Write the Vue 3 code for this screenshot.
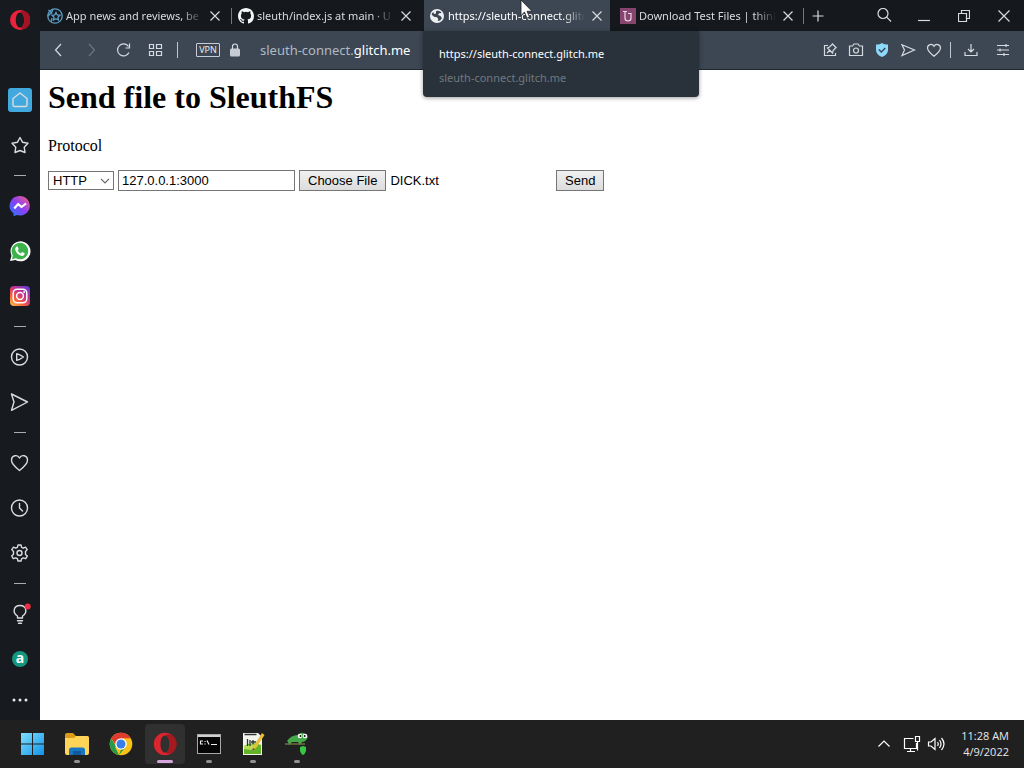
<script setup>
import { onMounted, ref } from 'vue'

const protocol = ref('HTTP')
const host = ref('127.0.0.1:3000')
const fileInput = ref(null)

onMounted(() => {
  const transfer = new DataTransfer()
  transfer.items.add(new File([''], 'DICK.txt', { type: 'text/plain' }))
  fileInput.value.files = transfer.files
})
</script>

<template>
  <div class="desktop">
    <div class="browser">
      <nav class="sidebar" aria-label="Sidebar">
        <button class="brand" aria-label="Opera menu">
          <svg width="20" height="20" viewBox="0 0 20 20"><path fill="#e8233b" fill-rule="evenodd" d="M10 0a10 10 0 1 0 0 20a10 10 0 0 0 0-20zM10 2.4c2.6 0 4.2 3.5 4.2 7.6s-1.6 7.6-4.2 7.6S5.8 14.1 5.8 10 7.400 2.400 10 2.400z"/><path fill="#a51224" d="M10 2.400c2-2 5-1.500 7-.1a10 10 0 0 1 0 15.400c-2 1.400-5 1.900-7-.1 2.600 0 4.200-3.500 4.200-7.600S12.600 2.400 10 2.400z"/></svg>
        </button>
        <button class="side" aria-label="Home">
          <svg width="24" height="24" viewBox="0 0 24 24"><rect width="24" height="24" rx="3" fill="#41a9de"/><path class="line" d="M5 10.500L12 5l7 5.500V17q0 1.500-1.500 1.500h-11Q5 18.500 5 17z"/></svg>
        </button>
        <button class="side" aria-label="Bookmarks">
          <svg class="line" width="20" height="20" viewBox="0 0 20 20"><path d="M10 2.500l2.500 4.700 5.500 1-3.800 4 .8 5.300-5-2-5 2 .8-5.300-3.800-4 5.500-1z"/></svg>
        </button>
        <hr />
        <button class="side" aria-label="Messenger">
          <svg width="22" height="22" viewBox="0 0 22 22"><defs><linearGradient id="msg" x1="0" y1="1" x2="1" y2="0"><stop stop-color="#1d7cff"/><stop offset=".5" stop-color="#8b3ff5"/><stop offset="1" stop-color="#ff6178"/></linearGradient></defs><path fill="url(#msg)" d="M11 1a10 9.700 0 1 1-3 19l-3.500 1.300v-3A10 9.700 0 0 1 11 1z"/><path fill="none" stroke="#fff" stroke-width="2.200" stroke-linejoin="round" d="M5.200 13.500l4-4.500 3.300 3L17 8.500"/></svg>
        </button>
        <button class="side" aria-label="WhatsApp">
          <svg width="22" height="22" viewBox="0 0 22 22"><path fill="#fff" d="M1 21l1.500-5.300A10 10 0 1 1 6.500 20z"/><path fill="#3bb34a" d="M2.900 19.200l1-3.700a8.300 8.300 0 1 1 3 2.800z"/><path fill="#fff" d="M7.500 6.500h1l1.200 2.600-1 1.300c.8 1.500 1.800 2.400 3.200 3l1.200-1.300 2.600 1.200c0 1.500-1 2.600-2.500 2.600-3.400 0-7-3.800-7-6.800q0-1.600 1.300-2.600z"/></svg>
        </button>
        <button class="side" aria-label="Instagram">
          <svg width="20" height="20" viewBox="0 0 20 20"><defs><linearGradient id="ig" x1="0" y1="1" x2=".8" y2="0"><stop stop-color="#ffc64d"/><stop offset=".35" stop-color="#f5603b"/><stop offset=".65" stop-color="#c9308c"/><stop offset="1" stop-color="#6b3bd1"/></linearGradient></defs><rect width="20" height="20" rx="4" fill="url(#ig)"/><g fill="none" stroke="#fff" stroke-width="1.500"><rect x="3.200" y="3.200" width="13.600" height="13.600" rx="4"/><circle cx="10" cy="10" r="3.400"/></g><circle cx="14.100" cy="5.900" r="1" fill="#fff"/></svg>
        </button>
        <hr />
        <button class="side" aria-label="Player">
          <svg class="line" width="20" height="20" viewBox="0 0 20 20"><circle cx="9.500" cy="10" r="8"/><path d="M6.700 6.700q3 .6 6.800 3.300-3.800 2.700-6.800 3.300z"/></svg>
        </button>
        <button class="side" aria-label="My Flow">
          <svg class="line" width="20" height="20" viewBox="0 0 20 20"><path d="M1.500 2l16 8-16 8.300 2.500-8.300z"/></svg>
        </button>
        <hr />
        <button class="side" aria-label="Pinboards">
          <svg class="line" width="20" height="20" viewBox="0 0 20 20"><path d="M9.500 17.500C5 14 1.500 11 1.500 7.300c0-5 6-6.300 8-2.300 2-4 8-2.700 8 2.300 0 3.700-3.500 6.700-8 10.200z"/></svg>
        </button>
        <button class="side" aria-label="History">
          <svg class="line" width="20" height="20" viewBox="0 0 20 20"><circle cx="9.500" cy="10" r="8"/><path d="M9.500 5.500V10l3 3"/></svg>
        </button>
        <button class="side" aria-label="Settings">
          <svg class="line" width="20" height="20" viewBox="0 0 20 20"><path d="M8 2h3l.6 2.400 1.600.8 2.300-1 1.700 2.400-1.700 1.900v2.900l1.800 1.700-1.600 2.600-2.500-.8-1.600 1L11 18H8l-.6-2.300-1.600-.9-2.500.8-1.600-2.600 1.800-1.700V8.500L1.800 6.600l1.700-2.400 2.300 1 1.600-.8z"/><circle cx="9.500" cy="10" r="2.500"/></svg>
        </button>
        <hr />
        <button class="side" aria-label="Tips">
          <svg class="line" width="24" height="24" viewBox="0 0 24 24"><path d="M9.500 16v-2C4.500 11 5 3.500 12 3.500S19.500 11 14.500 14v2zM9.500 18.800h5M10.500 21.300h3"/><circle cx="19.700" cy="4.500" r="3" fill="#f22c45" stroke="none"/></svg>
        </button>
        <button class="side" aria-label="Amazon">
          <span class="amazon">a</span>
        </button>
        <button class="side more" aria-label="More">
          <svg width="18" height="6" viewBox="0 0 18 6" fill="#e8eaec"><circle cx="3" cy="3" r="1.500"/><circle cx="9" cy="3" r="1.500"/><circle cx="15" cy="3" r="1.500"/></svg>
        </button>
      </nav>

      <div class="frame">
        <header class="tabs">
          <div class="tab">
            <svg class="fav" width="16" height="16" viewBox="0 0 16 16" fill="none" stroke="#5b9fc4" stroke-width="1.300"><circle cx="8" cy="8" r="7.200"/><path d="M9 4.500l1.200 2.400 2.800.4-2 2 .5 2.700L9 10.700 6.500 12l.5-2.700-2-2 2.800-.4zM1.500 2l3 3 1.500-4M1 8l3-3M4 14l1-4"/></svg>
            <a href="#" class="title">App news and reviews, be</a>
            <button class="close" aria-label="Close tab"><svg width="10" height="10" viewBox="0 0 10 10"><path d="M.5.500l9 9m0-9l-9 9"/></svg></button>
          </div>
          <div class="tab divided">
            <svg class="fav" width="16" height="16" viewBox="0 0 16 16"><path fill="#f4f5f6" d="M8 0C3.580 0 0 3.580 0 8c0 3.540 2.290 6.530 5.470 7.590.4.070.55-.17.55-.38 0-.19-.01-.82-.01-1.490-2.010.37-2.530-.49-2.690-.94-.09-.23-.48-.94-.82-1.130-.28-.15-.68-.52-.01-.53.63-.01 1.080.58 1.230.82.72 1.210 1.870.87 2.330.66.07-.52.28-.87.51-1.070-1.780-.2-3.640-.89-3.640-3.950 0-.87.31-1.590.82-2.150-.08-.2-.36-1.020.08-2.120 0 0 .67-.21 2.200.82a7.600 7.600 0 0 1 4 0c1.530-1.040 2.200-.82 2.200-.82.44 1.100.16 1.920.08 2.120.51.56.82 1.270.82 2.150 0 3.070-1.870 3.750-3.650 3.950.29.25.54.73.54 1.480 0 1.070-.01 1.930-.01 2.200 0 .21.15.46.55.38A8 8 0 0 0 16 8c0-4.420-3.580-8-8-8z"/></svg>
            <a href="#" class="title">sleuth/index.js at main · U</a>
            <button class="close" aria-label="Close tab"><svg width="10" height="10" viewBox="0 0 10 10"><path d="M.5.500l9 9m0-9l-9 9"/></svg></button>
          </div>
          <div class="tab active">
            <svg class="fav" width="16" height="16" viewBox="0 0 16 16"><circle cx="8" cy="8" r="7" fill="#eef1f4"/><path fill="#3c4753" d="M7 3.200c2-.9 4.500-.2 5.600 1.800L10 5.200 9 7l2.500 1 1.400 2c-.7 1.700-2.200 3-4.200 3.100L9.300 11 8 9.300l-3-.6-2.300-2C3 5.500 3.500 4.500 4.300 4L5 6l2-.6z"/></svg>
            <a href="#" class="title">https://sleuth-connect.glitch.me</a>
            <button class="close" aria-label="Close tab"><svg width="10" height="10" viewBox="0 0 10 10"><path d="M.5.500l9 9m0-9l-9 9"/></svg></button>
          </div>
          <div class="tab last">
            <svg class="fav" width="16" height="16" viewBox="0 0 16 16"><rect width="16" height="16" fill="#85456e"/><path fill="none" stroke="#f0d8e6" stroke-width="1.200" d="M3 3.500h4M5 3.500V10q0 3 3 3t3-3V5.500H8"/></svg>
            <a href="#" class="title">Download Test Files | think</a>
            <button class="close" aria-label="Close tab"><svg width="10" height="10" viewBox="0 0 10 10"><path d="M.5.500l9 9m0-9l-9 9"/></svg></button>
          </div>
          <button class="new" aria-label="New tab"><svg width="12" height="12" viewBox="0 0 12 12"><path d="M6 .5v11M.5 6h11"/></svg></button>
          <div class="controls">
            <button aria-label="Search tabs"><svg width="16" height="16" viewBox="0 0 16 16"><circle cx="7" cy="5.500" r="5"/><path d="M10.700 9.200l4.300 4.300"/></svg></button>
            <button aria-label="Minimize"><svg width="12" height="12" viewBox="0 0 12 12"><path d="M0 10.500h12"/></svg></button>
            <button aria-label="Restore"><svg width="12" height="12" viewBox="0 0 12 12"><path d="M.5 3.500h8v8h-8zM3.500 3V.5h8v8H9"/></svg></button>
            <button aria-label="Close window"><svg width="12" height="12" viewBox="0 0 12 12"><path d="M.5.500l11 11m0-11l-11 11"/></svg></button>
          </div>
          <div class="tooltip" role="tooltip">
            <strong>https://sleuth-connect.glitch.me</strong>
            <span>sleuth-connect.glitch.me</span>
          </div>
          <svg class="cursor" width="14" height="20" viewBox="0 0 14 20"><path fill="#fff" stroke="#222" stroke-width=".8" d="M1 0v15.500l3.500-3.400 2.400 6 2.600-1-2.500-5.800h5z"/></svg>
        </header>

        <div class="toolbar">
          <button aria-label="Back"><svg width="16" height="16" viewBox="0 0 16 16"><path d="M10 2L4.500 8l5.500 6"/></svg></button>
          <button aria-label="Forward" disabled><svg width="16" height="16" viewBox="0 0 16 16"><path d="M6 2l5.500 6L6 14"/></svg></button>
          <button aria-label="Reload"><svg width="16" height="16" viewBox="0 0 16 16"><path d="M14 10.500a6 6 0 1 1-.5-6M14.500 1.500v4.500h-4"/></svg></button>
          <button aria-label="Speed Dial"><svg width="16" height="16" viewBox="0 0 16 16"><path d="M2.500 2.500h4v4h-4zM9.500 2.500h5v4h-5zM2.500 9.500h4v4h-4zM9.500 9.500h5v4h-5z"/></svg></button>
          <i class="bar"></i>
          <button class="vpn"><span>VPN</span></button>
          <button class="lock" aria-label="Site information"><svg width="12" height="14" viewBox="0 0 12 14"><rect x="1" y="5.500" width="10" height="8" rx="1.500" fill="#c6cbd4" stroke="none"/><path d="M3.500 6V3.500a2.500 2.500 0 0 1 5 0V6"/></svg></button>
          <a href="#" class="address">sleuth-connect.<b>glitch.me</b></a>
          <div class="tools">
            <button aria-label="Snapshot editor"><svg width="16" height="16" viewBox="0 0 16 16"><path d="M6 3.500H2.500v10h11V11M5 11l3-3M5.500 6l5 5 .6-2.500 2.900-3-3.500-3.500-3 3zM10 1.500l4.500 4.500"/></svg></button>
            <button aria-label="Snapshot"><svg width="16" height="16" viewBox="0 0 16 16"><path d="M1.500 4h3L6 2h4l1.500 2h3v9.500h-13z"/><circle cx="8" cy="8.500" r="2.500"/></svg></button>
            <button aria-label="Ad blocker"><svg width="16" height="16" viewBox="0 0 16 16"><path fill="#8ed8fa" stroke="none" d="M8 1q3 2 6 1.500V8q0 4.500-6 7-6-2.500-6-7V2.500Q5 3 8 1z"/><path stroke="#354a5c" stroke-width="1.500" d="M4.800 7.500l2.500 2.500 4-4"/></svg></button>
            <button aria-label="My Flow"><svg width="16" height="16" viewBox="0 0 16 16"><path d="M2 2.800L14.500 8 2 13.500 4.500 8z"/></svg></button>
            <button aria-label="Add to favourites"><svg width="16" height="16" viewBox="0 0 16 16"><path d="M8 14.300C4.500 11.500 1.500 9 1.500 6c0-4 5-4.600 6.500-1.700C9.500 1.400 14.500 2 14.500 6c0 3-3 5.500-6.500 8.300z"/></svg></button>
            <i class="bar"></i>
            <button class="wide" aria-label="Downloads"><svg width="16" height="16" viewBox="0 0 16 16"><path d="M8 2v8M5 7l3 3 3-3M2 10v3.500h12V10"/></svg></button>
            <button class="wide" aria-label="Easy setup"><svg width="16" height="16" viewBox="0 0 16 16"><path d="M2 3.500h12M2 8h12M2 12.500h12M11 2v3M5 6.500v3M9 11v3"/></svg></button>
          </div>
        </div>

        <main class="page">
          <h1>Send file to SleuthFS</h1>
          <p><label for="protocol">Protocol</label></p>
          <form @submit.prevent>
            <span class="pick">
              <select id="protocol" v-model="protocol"><option>HTTP</option><option>HTTPS</option></select>
              <svg width="10" height="6" viewBox="0 0 10 6"><path fill="none" stroke="#666" stroke-width="1.200" d="M1 .8l4 4 4-4"/></svg>
            </span>
            <input v-model="host" class="host" type="text" aria-label="Host" />
            <input ref="fileInput" class="file" type="file" aria-label="File" />
            <button class="send" type="submit">Send</button>
          </form>
        </main>
      </div>
    </div>

    <footer class="taskbar">
      <div class="apps">
        <button aria-label="Start"><svg width="24" height="24" viewBox="0 0 24 24"><defs><linearGradient id="win" x1="0" y1="0" x2="1" y2="1"><stop stop-color="#7fe0ff"/><stop offset="1" stop-color="#1292e8"/></linearGradient></defs><path fill="url(#win)" d="M0 1h11v10.500H0zM12 1h11v10.500H12zM0 12.500h11V23H0zM12 12.500h11V23H12z"/></svg></button>
        <button class="running" aria-label="File Explorer"><svg width="26" height="24" viewBox="0 0 26 24"><path fill="#dc9a18" d="M1 3q0-2 2-2h6l3 3h11q2 0 2 2v4H1z"/><path fill="#ffd457" d="M1 6h9l2-2h11q2 0 2 2v15q0 2-2 2H3q-2 0-2-2z"/><path fill="#1976c5" d="M5 23v-5q0-2.500 2.500-2.500h11Q21 15.500 21 18v5z"/><path fill="#125a9e" d="M9 19h8v4H9z"/></svg></button>
        <button aria-label="Chrome"><svg width="24" height="24" viewBox="0 0 24 24"><circle cx="12" cy="12" r="11.300" fill="#fbc117"/><path fill="#df3b30" d="M2.200 6.350A11.300 11.300 0 0 1 21.800 6.350H12L8 15z"/><path fill="#279b48" d="M2.200 6.350L7.100 14.800 12 17.500l-2 5.600A11.300 11.300 0 0 1 2.200 6.350zM10 23l6.900-8.200-6-1-5 1z"/><circle cx="12" cy="12" r="5.800" fill="#fff"/><circle cx="12" cy="12" r="4.500" fill="#397ee8"/></svg></button>
        <button class="running current" aria-label="Opera"><svg width="24" height="24" viewBox="0 0 24 24"><path fill="#dc252f" fill-rule="evenodd" d="M12 .8a11.200 11.200 0 1 0 0 22.400A11.200 11.200 0 0 0 12 .8zM12 3.400c3 0 4.500 4 4.500 8.600s-1.500 8.600-4.500 8.600-4.500-4-4.500-8.600S9 3.400 12 3.400z"/><path fill="#a51a20" d="M12 3.400c2-1.800 5-1.500 7.500-.1a11.200 11.200 0 0 1 0 17.400c-2.500 1.400-5.500 1.700-7.500-.1 3 0 4.500-4 4.500-8.600S15 3.400 12 3.400z"/></svg></button>
        <button class="running" aria-label="Command Prompt"><svg width="24" height="20" viewBox="0 0 24 20"><rect x=".5" y=".5" width="23" height="19" fill="#050505" stroke="#a8a8a8"/><path fill="#d0d0d0" d="M1 1h22v2H1z"/><path fill="none" stroke="#eee" stroke-width="1.200" d="M6 7H3.500v3H6M8 7v1m0 1.500v1M10 6.500l2 4M14 10.500h6"/></svg></button>
        <button class="running" aria-label="Notepad++"><svg width="24" height="24" viewBox="0 0 24 24"><path fill="#f4f4ef" d="M2 1h15l4 4v18H2z"/><path fill="#62b526" d="M3 14q8-5 17-1v9H3z"/><path fill="#b4dd55" d="M3 14q8-3 14 0l-7 4-7-1z"/><path fill="none" stroke="#333" stroke-width="1.300" d="M6.500 7v7M9 8v6M10 10h5M12 8v4M3.500 2.500h12"/><path fill="#eabf38" d="M21 1l2.500 2L15 16l-4 3 1.500-5z"/><path fill="#555" d="M11 19l1-3 2 1z"/></svg></button>
        <button class="running" aria-label="Chameleon tool"><svg width="24" height="24" viewBox="0 0 24 24"><path fill="#45a849" d="M2 9q4-6 11-6 2-3 6-2l4 4q-2 5-6 5l-2 3-2-3H7l-3 3-1-3z"/><circle cx="15" cy="4" r="2.300" fill="#fff"/><circle cx="20" cy="4" r="2.300" fill="#fff"/><circle cx="15.500" cy="4" r="1" fill="#111"/><circle cx="19.700" cy="4" r="1" fill="#111"/><path stroke="#787d43" stroke-width="1.300" d="M0 12h20"/><path fill="#36c844" d="M15 15l3-1 3 1v4q-1 3-3 4-2-1-3-4z"/></svg></button>
      </div>
      <div class="tray">
        <button aria-label="Show hidden icons"><svg width="14" height="14" viewBox="0 0 14 14"><path d="M1.500 9.500L7 4l5.500 5.500"/></svg></button>
        <button class="status" aria-label="Network and volume">
          <svg width="18" height="18" viewBox="0 0 18 18"><path d="M10.500 3.500H1.500v10h12V8M4 16.500h8M7.500 13.500v3M12.500 1.500h4v5h-4zM14.500 6.500v9"/></svg>
          <svg width="18" height="18" viewBox="0 0 18 18"><path d="M1.500 7v4h2.500l4 3.500v-11L4 7zM10.500 7q1.500 2 0 4M12.500 5q3 4 0 8M14.500 3q5 6 0 12"/></svg>
        </button>
        <button class="clock"><span>11:28 AM</span><span>4/9/2022</span></button>
      </div>
    </footer>
  </div>
</template>

<style>
body { margin: 0; }
</style>

<style scoped>
* { box-sizing: border-box; }
.desktop {
  min-height: 100vh;
  display: flex;
  flex-direction: column;
  background: #171b1f;
  font-family: "Noto Sans", "Open Sans", sans-serif;
  font-size: 11px;
  color: #e6e9ec;
}
button { font: inherit; color: inherit; }
.browser button, .taskbar button {
  display: flex;
  align-items: center;
  justify-content: center;
  border: 0;
  padding: 0;
  background: none;
}
.browser { flex: 1; display: flex; }
.sidebar {
  width: 40px;
  flex: none;
  display: flex;
  flex-direction: column;
  background: #171b1f;
}
.sidebar .brand { height: 40px; margin-bottom: 37px; }
.sidebar .side { height: 45px; }
.sidebar .more { height: 37px; }
.sidebar hr {
  width: 12px;
  height: 1px;
  margin: 8px auto 7px;
  border: 0;
  background: #a9adb1;
}
.line { fill: none; stroke: #d9dcdf; stroke-width: 1.4; stroke-linejoin: round; stroke-linecap: round; }
.amazon {
  width: 16px;
  height: 16px;
  border-radius: 50%;
  background: #14967f;
  color: #fff;
  font-weight: 700;
  font-size: 14px;
  line-height: 14px;
}
.frame { flex: 1; min-width: 0; display: flex; flex-direction: column; }
.tabs { position: relative; display: flex; height: 31px; background: #15181d; }
.tab {
  position: relative;
  flex: 0 1 191px;
  min-width: 0;
  display: flex;
  align-items: center;
  padding: 0 8px 0 7px;
}
.divided::before, .last::after {
  content: "";
  position: absolute;
  top: 8px;
  left: 0;
  width: 1px;
  height: 16px;
  background: #73787d;
}
.last::after { left: auto; right: 0; }
.active { background: linear-gradient(#3c4753, #3c4753) 2px 0 / calc(100% - 5px) 100% no-repeat; }
.fav { flex: none; }
.title {
  flex: 1;
  min-width: 0;
  margin: 0 4px 0 3px;
  overflow: hidden;
  white-space: nowrap;
  color: #d8dbde;
  text-decoration: none;
  mask-image: linear-gradient(to right, #000 84%, transparent);
}
.active .title { color: #fff; }
.close { width: 16px; height: 24px; flex: none; align-self: center; }
.tabs button svg { fill: none; stroke: #d8dbde; stroke-width: 1.2; }
.new { width: 28px; }
.controls { display: flex; margin-left: auto; }
.controls button { width: 40px; }
.tooltip {
  position: absolute;
  z-index: 2;
  top: 31px;
  left: 383px;
  width: 276px;
  display: flex;
  flex-direction: column;
  padding: 11px 16px 7px;
  border-radius: 0 0 4px 4px;
  background: #29323a;
  box-shadow: 0 1px 4px #0006;
  line-height: 24px;
}
.tooltip strong { font-weight: 400; color: #fff; }
.tooltip span { color: #707980; }
.cursor { position: absolute; z-index: 3; top: 0; left: 480px; }
.toolbar {
  height: 39px;
  display: flex;
  align-items: center;
  padding: 0 5px 0 3px;
  border-bottom: 1px solid #20272e;
  background: #3c4753;
}
.toolbar button { width: 32px; height: 32px; }
.toolbar svg { fill: none; stroke: #d5dae1; stroke-width: 1.2; }
.toolbar button:disabled { opacity: .3; }
.bar { width: 1px; height: 16px; background: #c2c8cf; }
.toolbar > .bar { margin: 0 18px 0 6px; }
.toolbar .vpn { width: 24px; }
.vpn span {
  width: 24px;
  border: 1px solid #c6cbd4;
  border-radius: 1px;
  font-size: 9px;
  line-height: 12px;
}
.toolbar .lock { width: 16px; margin: 0 17px 0 7px; }
.address { font-size: 13px; color: #b1b9c3; text-decoration: none; white-space: nowrap; }
.address b { font-weight: 400; color: #fff; }
.tools { display: flex; align-items: center; margin-left: auto; }
.toolbar .tools button { width: 26px; }
.tools .bar { margin: 0 4px 0 3px; }
.toolbar .tools .wide { width: 32px; }
.page {
  flex: 1;
  padding: 8px;
  background: #fff;
  color: #000;
  font-family: "Liberation Serif", serif;
  font-size: 16px;
}
.page h1 { margin: 0 0 21px; font-size: 32px; line-height: 38px; }
.page p { margin: 0 0 15px; line-height: 18px; }
.page form {
  display: flex;
  flex-wrap: wrap;
  gap: 4px;
  align-items: center;
  font-family: "Liberation Sans", sans-serif;
  font-size: 13px;
}
.pick { position: relative; display: flex; }
.pick svg { position: absolute; right: 4px; top: 7px; pointer-events: none; }
.page select {
  appearance: none;
  width: 66px;
  height: 19px;
  padding: 0 16px 0 4px;
  border: 1px solid #767676;
  border-radius: 0;
  background: #fff;
  color: #000;
  font: inherit;
}
.host {
  width: 177px;
  height: 21px;
  padding: 1px 3px;
  border: 1px solid #767676;
  color: #000;
  font: inherit;
}
.file { width: 253px; height: 21px; color: #000; font: inherit; }
.file::file-selector-button, .browser .send {
  height: 21px;
  padding: 0 8px;
  border: 1px solid #767676;
  border-radius: 0;
  background: linear-gradient(#f0f0f0, #dcdcdc);
  color: #000;
  font: inherit;
}
.file::file-selector-button { margin-right: 4px; }
.taskbar {
  height: 48px;
  display: flex;
  justify-content: space-between;
  padding: 0 15px 0 13px;
  background: #202020;
}
.apps { display: flex; align-items: center; gap: 4px; }
.apps button { position: relative; width: 40px; height: 40px; border-radius: 4px; }
.apps .current { background: #303030; }
.running::after {
  content: "";
  position: absolute;
  bottom: 1px;
  left: 17px;
  width: 6px;
  height: 3px;
  border-radius: 2px;
  background: #929292;
}
.current::after { left: 12px; width: 16px; background: #d5a5dc; }
.tray { display: flex; align-items: center; gap: 12px; }
.tray svg { fill: none; stroke: #fff; stroke-width: 1.2; }
.tray .status { gap: 6px; }
.taskbar .clock {
  flex-direction: column;
  align-items: flex-end;
  margin-left: 4px;
  font-family: "Open Sans", sans-serif;
  font-size: 11px;
  line-height: 16px;
}
</style>
